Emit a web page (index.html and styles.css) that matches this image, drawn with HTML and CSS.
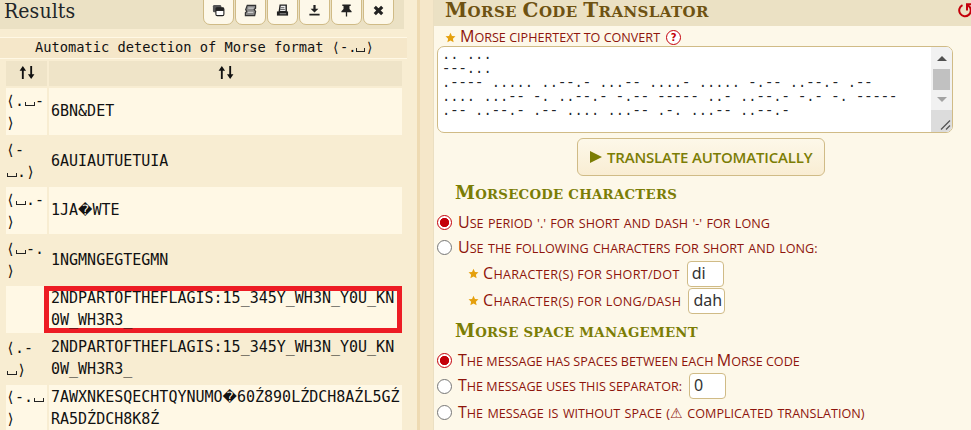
FILE: index.html
```
<!DOCTYPE html>
<html lang="en">
<head>
<meta charset="utf-8">
<title>Morse Code Translator</title>
<link rel="stylesheet" href="styles.css">
</head>
<body>
<main class="page">
  <section class="results">
    <header class="results-head">
      <h1>Results</h1>
      <div class="tools">
        <button class="tool" aria-label="Copy"><svg viewBox="0 0 14 14"><rect x="1" y="1" width="9" height="8" rx="1.500" fill="#555"/><rect x="4.200" y="4.200" width="8.600" height="8.300" rx="1.500" fill="#fff" stroke="#222" stroke-width="1.200"/><path d="M4.200 4h8.600v3.500H4.200z" fill="#222"/></svg></button>
        <button class="tool" aria-label="CSV"><svg viewBox="0 0 14 14"><path d="M3.500 1.500h9v3l-1.500 1.500 1.500 2-1 4.500H1.500V9.500L3 8 1.800 6z" fill="#888" stroke="#333" stroke-width="1.300"/><path d="M4.500 4.500h6M4 9h6" stroke="#ccc" stroke-width="1.200"/></svg></button>
        <button class="tool" aria-label="Print"><svg viewBox="0 0 14 14"><path d="M4.500 1.200h6.500v7H3.500z" fill="#eee" stroke="#222" stroke-width="1.500"/><path d="M5 4h4M4.500 6h5" stroke="#555"/><path d="M1 8h12v4.500H1z" fill="#222"/><path d="M4 10.500h7" stroke="#999"/></svg></button>
        <button class="tool" aria-label="Download"><svg viewBox="0 0 14 14"><path d="M5.800 1h2.400v4h3L7 9.200 2.800 5h3zM1.500 10.500h11v2h-11z" fill="#222"/></svg></button>
        <button class="tool" aria-label="Pin"><svg viewBox="0 0 14 14"><path d="M2.500 .5h9v1.700h-1.300v3.300L12.500 7.800V9H7.700v4.500H6.300V9H1.500V7.800l2.300-2.300V2.200H2.500z" fill="#222"/></svg></button>
        <button class="tool" aria-label="Close"><svg viewBox="0 0 14 14"><path d="M3 3l8 8M11 3l-8 8" stroke="#222" stroke-width="3.400"/></svg></button>
      </div>
    </header>
    <div class="caption">Automatic detection of Morse format ⟨-.<i class="sp">␣</i>⟩</div>
    <div class="table">
      <div class="row head">
        <div class="cell"><svg class="sort" viewBox="0 0 17 14"><path d="M3 14V5H0.500L4 0l3.500 5H5v9zM12 0v9H9.500l3.500 5 3.500-5H14V0z"/></svg></div>
        <div class="cell"><svg class="sort" viewBox="0 0 17 14"><path d="M3 14V5H0.500L4 0l3.500 5H5v9zM12 0v9H9.500l3.500 5 3.500-5H14V0z"/></svg></div>
      </div>
      <div class="row light"><div class="cell"><span>⟨.<i class="sp">␣</i>-<br>⟩</span></div><div class="cell">6BN&amp;DET</div></div>
      <div class="row"><div class="cell"><span>⟨-<br><i class="sp">␣</i>.⟩</span></div><div class="cell">6AUIAUTUETUIA</div></div>
      <div class="row light"><div class="cell"><span>⟨<i class="sp">␣</i>.-<br>⟩</span></div><div class="cell"><span>1JA<i class="bad">�</i>WTE</span></div></div>
      <div class="row"><div class="cell"><span>⟨<i class="sp">␣</i>-.<br>⟩</span></div><div class="cell">1NGMNGEGTEGMN</div></div>
      <div class="row light"><div class="cell"></div><div class="cell marked">2NDPARTOFTHEFLAGIS:15_345Y_WH3N_Y0U_KN<br>0W_WH3R3_</div></div>
      <div class="row"><div class="cell"><span>⟨.-<br><i class="sp">␣</i>⟩</span></div><div class="cell">2NDPARTOFTHEFLAGIS:15_345Y_WH3N_Y0U_KN<br>0W_WH3R3_</div></div>
      <div class="row light"><div class="cell"><span>⟨-.<i class="sp">␣</i><br>⟩</span></div><div class="cell"><span>7AWXNKESQECHTQYNUMO<i class="bad">�</i>60Ź890LŹDCH8AŹL5GŹ<br>RA5DŹDCH8K8Ź</span></div></div>
    </div>
  </section>
  <section class="translator">
    <header class="title"><h2><b>M</b>orse <b>C</b>ode <b>T</b>ranslator</h2>
      <svg class="reset" viewBox="0 0 17 17"><path d="M5.500 3.200A5.800 5.800 0 1 0 12 4.200L10.500 3"/><path d="M10 8.500V2.300h7"/></svg>
    </header>
    <div class="label"><svg class="star" viewBox="0 0 12 12"><path d="M6 .8l1.600 3.500 3.800.4-2.800 2.600.8 3.800L6 9.200l-3.400 1.900.8-3.800L.6 4.700l3.800-.4z"/></svg><span class="caps">Morse ciphertext to convert</span><span class="help">?</span></div>
    <div class="area">
      <pre class="morse">.. ...
---...
.---- ..... ..--.- ...-- ....- ..... -.-- ..--.- .--
.... ...-- -. ..--.- -.-- ----- ..- ..--.- -.- -. -----
.-- ..--.- .-- .... ...-- .-. ...-- ..--.-</pre>
      <div class="scroll"><i class="up"></i><i class="thumb"></i><i class="down"></i>
        <svg class="grip" viewBox="0 0 21 21"><path d="M10 19l9-9M15 19l4-4"/></svg></div>
    </div>
    <button class="go"><i class="play"></i><span>TRANSLATE AUTOMATICALLY</span></button>
    <h3><span class="caps">Morsecode characters</span></h3>
    <label class="opt"><i class="radio on"></i><span class="caps loose">Use period '.' for short and dash '-' for long</span></label>
    <label class="opt"><i class="radio"></i><span class="caps loose">Use the following characters for short and long:</span></label>
    <div class="sub"><svg class="star" viewBox="0 0 12 12"><path d="M6 .8l1.600 3.500 3.800.4-2.800 2.600.8 3.800L6 9.200l-3.400 1.900.8-3.800L.6 4.700l3.800-.4z"/></svg><span class="caps">Character(s) for short/dot</span><span class="field">di</span></div>
    <div class="sub"><svg class="star" viewBox="0 0 12 12"><path d="M6 .8l1.600 3.500 3.800.4-2.800 2.600.8 3.800L6 9.200l-3.400 1.900.8-3.800L.6 4.700l3.800-.4z"/></svg><span class="caps">Character(s) for long/dash</span><span class="field">dah</span></div>
    <h3><span class="caps">Morse space management</span></h3>
    <label class="opt"><i class="radio on"></i><span class="caps">The message has spaces between each <b>M</b>orse code</span></label>
    <label class="opt tall"><i class="radio"></i><span class="caps">The message uses this separator:</span><span class="field">0</span></label>
    <label class="opt tall"><i class="radio"></i><span class="caps loose">The message is without space (<i class="warn">⚠</i> complicated translation)</span></label>
  </section>
</main>
</body>
</html>
```
FILE: styles.css
```
* { box-sizing: border-box; }
body { margin: 0; background: #f5e7c9; overflow: hidden; }
h1, h2, h3, pre { margin: 0; font-weight: normal; }
i { font-style: normal; }
.page { display: flex; width: 971px; height: 430px; overflow: hidden; white-space: nowrap; }
.results { width: 420px; flex: none; background: #f8edd2; border-right: 3px solid #eedab2; font: 15px/22px "DejaVu Sans Mono", monospace; color: #111; }
.results-head { display: flex; justify-content: space-between; width: 404px; height: 29px; background: #ebe1c4; padding-left: 4px; }
h1 { font: 21px/23px "DejaVu Serif Condensed", "DejaVu Serif", serif; color: #212529; letter-spacing: .1px; }
.tools { display: flex; gap: 1px; padding-right: 10px; }
.tool { width: 31px; height: 35px; margin-top: -10px; padding: 10px 0 0; border: 1px solid #d0bb86; border-radius: 7px; background: #fdf8e9; display: flex; justify-content: center; }
.tool svg { width: 13px; height: 13px; margin-top: 3px; }
.caption { width: 407px; height: 22px; margin-top: 8px; padding-left: 35px; border-top: 1px solid #fff8e5; border-bottom: 1px solid #fff8e5; background: #f5e7c9; font-size: 13.7px; line-height: 19px; }
.table { margin: 2px 0 0 6px; display: flex; flex-direction: column; gap: 2.4px; }
.row { display: grid; grid-template-columns: 41px 353px; gap: 2px; height: 47px; flex: none; }
.cell { display: flex; align-items: center; padding: 0 0 1px 2px; }
.cell:first-child { padding: 0; }
.head { height: 25px; }
.head .cell { background: #efe4c8; justify-content: center; padding: 0 0 2px; }
.light .cell { background: #fff8e5; }
.sort { width: 16px; height: 13px; fill: #111; }
.sp { display: inline-block; width: 10px; height: 4px; margin: 0 .5px; border: 1px solid #222; border-top: 0; font-size: 8px; line-height: 4px; color: transparent; vertical-align: 0; overflow: hidden; }
.caption .sp { margin: 0; width: 9px; }
.bad { font: 14px/14px "DejaVu Sans", sans-serif; }
.marked { box-shadow: inset 0 0 0 5px #ed1c24; margin-left: -5px; padding-left: 7px; }
.translator { flex: 1; min-width: 0; margin-left: 13px; background: #fdf8e9; border-left: 1px solid #ebdfc2; color: #8e150c; font: 16px/20px "Open Sans", sans-serif; display: flex; flex-direction: column; padding-left: 3px; }
.title { height: 26px; margin-left: -3px; background: #ebe1c4; display: flex; justify-content: space-between; padding-left: 11px; flex: none; overflow: hidden; }
h2 { font: bold 15px/24px "DejaVu Serif", serif; text-transform: uppercase; color: #6e5212; letter-spacing: .4px; }
h2 b { font-size: 20px; line-height: 20px; }
.caps { display: block; flex: none; font-size: 12.6px; text-transform: uppercase; }
.caps::first-letter, .caps b { font-size: 16px; font-weight: inherit; }
.loose { word-spacing: 1.1px; }
.warn { font-size: 14px; line-height: 14px; }
.reset { width: 17px; height: 17px; margin: 2px -3px 0 0; fill: none; stroke: #c4000a; stroke-width: 2; flex: none; }
.label { display: flex; align-items: center; height: 20px; padding: 2px 0 0 8px; flex: none; }
.star { width: 11px; height: 11px; fill: #e5a00d; margin-right: 4px; flex: none; }
.help { width: 15px; height: 15px; border: 1px solid #c4000a; border-radius: 50%; color: #c4000a; background: #fff; font: bold 10px/13px "DejaVu Sans", sans-serif; text-align: center; margin-left: 6px; }
.area { display: flex; justify-content: space-between; width: 516px; height: 87px; border: 1px solid #d0bb86; border-radius: 7px; overflow: hidden; background: #fff; flex: none; }
.morse { padding: 2px 0 0 4px; font: 13.8px/14px "Liberation Mono", monospace; color: #212529; }
.scroll { display: flex; flex-direction: column; align-items: center; width: 21px; background: #f1f1f1; }
.up { border: 5px solid transparent; border-top: 0; border-bottom-color: #505050; margin-top: 9px; }
.thumb { width: 17px; height: 21px; background: #c1c1c1; margin-top: 8px; }
.down { border: 5px solid transparent; border-bottom: 0; border-top-color: #a3a3a3; margin: 7px 0 8px; }
.grip { width: 21px; height: 22px; background: #dcdcdc; stroke: #555; stroke-width: 1.3; fill: none; }
.go { width: 248px; height: 38px; margin: 5px 0 0 140px; padding: 0 0 0 12px; display: flex; align-items: center; border: 1px solid #d0bb86; border-radius: 6px; background: linear-gradient(#fdf8e9, #f9edd3); color: #7b7d05; font: 600 15px/20px "Open Sans", sans-serif; letter-spacing: -.18px; flex: none; }
.play { border-left: 12px solid #7b7d05; border-top: 6px solid transparent; border-bottom: 6px solid transparent; margin-right: 5px; }
h3 { height: 34px; padding: 1px 0 0 18px; font: bold 13.3px/31px "DejaVu Serif", serif; color: #7b7d05; letter-spacing: .26px; flex: none; }
h3 .caps { font-size: 13.3px; }
h3 .caps::first-letter { font-size: 18px; }
.opt { display: flex; align-items: center; height: 25px; flex: none; }
.tall { height: 26.5px; }
.radio { width: 15px; height: 15px; border: 1px solid #767676; border-radius: 50%; background: #fff; margin-right: 6px; flex: none; }
.radio.on { border-color: #c4000a; background: radial-gradient(circle, #c4000a 4.3px, #fff 5px); }
.sub { display: flex; align-items: center; height: 27px; padding-left: 31px; letter-spacing: .3px; flex: none; }
.field { height: 26px; margin-left: 7px; padding: 0 4px; border: 1px solid #d0bb86; border-radius: 4px; background: #fff; color: #333; font: 16px/23px "Noto Sans", sans-serif; letter-spacing: 0; width: 37px; }
```
